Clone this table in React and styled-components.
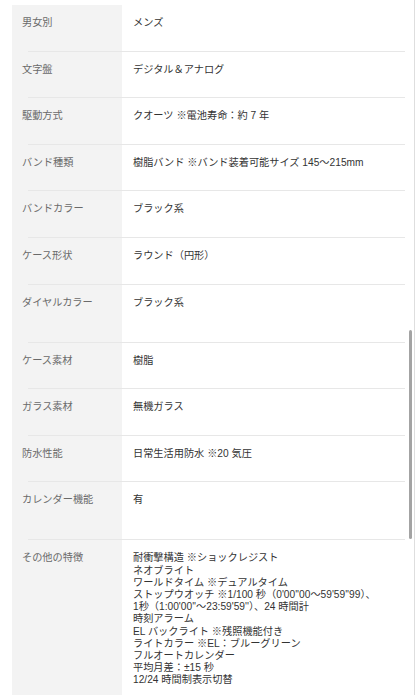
import styled, { createGlobalStyle } from "styled-components";

const GlobalStyle = createGlobalStyle`
  html, body {
    margin: 0;
    padding: 0;
    background: #ffffff;
    overflow: hidden;
  }
  body {
    font-family: "Liberation Sans", "Noto Sans CJK JP", sans-serif;
  }
`;

const Page = styled.div`
  position: relative;
  box-sizing: border-box;
  width: 415px;
  height: 695px;
  padding: 5px 0 0 12px;
  border-right: 1px solid #dedede;
  overflow: hidden;
`;

const SpecTable = styled.div`
  display: flex;
  flex-direction: column;
  background: linear-gradient(to right, #f3f3f3 0, #f3f3f3 110px, #ffffff 110px);
`;

const Row = styled.div`
  display: grid;
  grid-template-columns: 110px 1fr;
  min-height: ${(props) => (props.tall ? "57px" : "45.6px")};
  box-sizing: border-box;
  padding: 12px 0 9px;
  font-size: 10.2px;
  line-height: 12.2px;
`;

const Label = styled.div`
  padding-left: 10px;
  color: #6a6a6a;
`;

const Value = styled.div`
  padding-left: 11px;
  color: #333333;
  white-space: pre-line;
`;

const Divider = styled.div`
  height: 1px;
  margin: 0 9px 0 16px;
  background: #e7e7e7;
`;

const ScrollThumb = styled.div`
  position: absolute;
  right: 2px;
  top: 330px;
  width: 3px;
  height: 209px;
  border-radius: 2px;
  background: #a3a3a3;
`;

const specs = [
  { label: "男女別", value: "メンズ" },
  { label: "文字盤", value: "デジタル＆アナログ" },
  { label: "駆動方式", value: "クオーツ ※電池寿命：約 7 年" },
  { label: "バンド種類", value: "樹脂バンド ※バンド装着可能サイズ 145～215mm" },
  { label: "バンドカラー", value: "ブラック系" },
  { label: "ケース形状", value: "ラウンド（円形）" },
  { label: "ダイヤルカラー", value: "ブラック系", tall: true },
  { label: "ケース素材", value: "樹脂" },
  { label: "ガラス素材", value: "無機ガラス" },
  { label: "防水性能", value: "日常生活用防水 ※20 気圧" },
  { label: "カレンダー機能", value: "有", tall: true },
  {
    label: "その他の特徴",
    value: [
      "耐衝撃構造 ※ショックレジスト",
      "ネオブライト",
      "ワールドタイム ※デュアルタイム",
      "ストップウオッチ ※1/100 秒（0'00''00～59'59''99）、",
      "1秒（1:00'00''～23:59'59''）、24 時間計",
      "時刻アラーム",
      "EL バックライト ※残照機能付き",
      "ライトカラー ※EL：ブルーグリーン",
      "フルオートカレンダー",
      "平均月差：±15 秒",
      "12/24 時間制表示切替",
    ].join("\n"),
  },
];

const App = () => {
  return (
    <>
      <GlobalStyle />
      <Page>
        <SpecTable>
          {specs.map((spec, i) => (
            <div key={spec.label}>
              {i > 0 && <Divider />}
              <Row tall={spec.tall}>
                <Label>{spec.label}</Label>
                <Value>{spec.value}</Value>
              </Row>
            </div>
          ))}
        </SpecTable>
        <ScrollThumb />
      </Page>
    </>
  );
};

export default App;
